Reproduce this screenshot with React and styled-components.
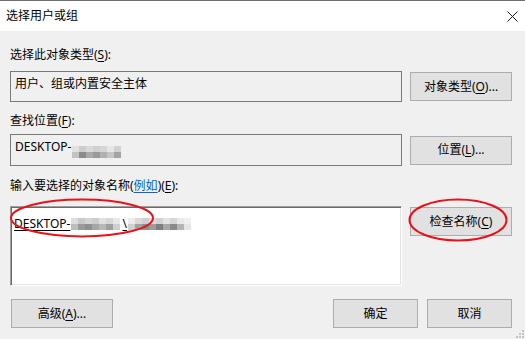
import React from 'react';
import styled, { createGlobalStyle } from 'styled-components';

const GlobalStyle = createGlobalStyle`
	html, body {
		margin: 0;
		padding: 0;
		background: #f0f0f0;
	}
	* {
		box-sizing: border-box;
	}
`;

// Mosaic cell colours for the blurred computer/user names
const locationMosaic = [
	['#e2e2e2', '#cdcdcd', '#d9d9d9', '#d0d0d0', '#d6d6d6', '#e6e6e6', '#d2d2d2'],
	['#c2c2c2', '#8c8c8c', '#a9a9a9', '#9a9a9a', '#b1b1b1', '#c6c6c6', '#a3a3a3'],
];

const hostMosaic = [
	['#dcdcdc', '#c9c9c9', '#d4d4d4', '#cccccc', '#e0e0e0', '#d7d7d7', '#e8e8e8'],
	['#bdbdbd', '#9a9a9a', '#8f8f8f', '#a6a6a6', '#b8b8b8', '#9e9e9e', '#cfcfcf'],
];

const userMosaic = [
	['#ececec', '#d9d9d9', '#cfcfcf', '#dcdcdc', '#d2d2d2', '#e4e4e4', '#d6d6d6', '#eaeaea', '#f0f0f0'],
	['#d0d0d0', '#a2a2a2', '#8e8e8e', '#9c9c9c', '#7f7f7f', '#a8a8a8', '#8a8a8a', '#b4b4b4', '#e6e6e6'],
];

const Mosaic = ({ rows, cell = 7 }) => (
	<MosaicGrid $cols={rows[0].length} $cell={cell}>
		{rows.flat().map((c, i) => (
			<MosaicCell key={i} $color={c} />
		))}
	</MosaicGrid>
);

const App = () => {
	return (
		<>
			<GlobalStyle />
			<Dialog>
				<TitleBar>
					<Title>选择用户或组</Title>
					<Close width='11' height='11' viewBox='0 0 11 11'>
						<path d='M0.5 0.5 L10.5 10.5 M10.5 0.5 L0.5 10.5' stroke='#1a1a1a' strokeWidth='1' fill='none' />
					</Close>
				</TitleBar>
				<Body>
					<Label $top={16}>
						选择此对象类型(<U>S</U>):
					</Label>
					<Row $top={8}>
						<ReadField $h={31} $pad={4}>用户、组或内置安全主体</ReadField>
						<Button>
							对象类型(<U>O</U>)...
						</Button>
					</Row>

					<Label $top={11}>
						查找位置(<U>F</U>):
					</Label>
					<Row $top={5}>
						<ReadField $h={32} $pad={4}>
							<Latin>DESKTOP-</Latin>
							<Mosaic rows={locationMosaic} />
						</ReadField>
						<Button>
							位置(<U>L</U>)...
						</Button>
					</Row>

					<Label $top={12}>
						输入要选择的对象名称(<Link>例如</Link>)(<U>E</U>):
					</Label>
					<Row $top={12} $top_align>
						<NameField>
							<NameLine>
								<Latin $underline>DESKTOP-</Latin>
								<Mosaic rows={hostMosaic} />
								<Latin $underline>\</Latin>
								<Mosaic rows={userMosaic} />
							</NameLine>
						</NameField>
						<Button $start>
							检查名称(<U>C</U>)
						</Button>
					</Row>

					<Footer>
						<Button $w={102}>
							高级(<U>A</U>)...
						</Button>
						<FooterRight>
							<Button $w={85}>确定</Button>
							<Button $w={85}>取消</Button>
						</FooterRight>
					</Footer>
				</Body>

				<Annotations width='525' height='339' viewBox='0 0 525 339'>
					<ellipse cx='82' cy='218' rx='71' ry='18.5' stroke='#e8121b' strokeWidth='2' fill='none' />
					<ellipse cx='458' cy='220' rx='48.5' ry='20.5' stroke='#e8121b' strokeWidth='2' fill='none' />
				</Annotations>

				<Grip width='10' height='10' viewBox='0 0 10 10'>
					<rect x='7' y='1' width='2' height='2' fill='#c4c4c4' />
					<rect x='4' y='4' width='2' height='2' fill='#c4c4c4' />
					<rect x='7' y='4' width='2' height='2' fill='#c4c4c4' />
					<rect x='1' y='7' width='2' height='2' fill='#c4c4c4' />
					<rect x='4' y='7' width='2' height='2' fill='#c4c4c4' />
					<rect x='7' y='7' width='2' height='2' fill='#c4c4c4' />
				</Grip>
			</Dialog>
		</>
	);
};

const Dialog = styled.div`
	position: relative;
	width: 525px;
	height: 339px;
	background: #f0f0f0;
	border-top: 1px solid #6f6f6f;
	font-family: 'Segoe UI', 'Noto Sans', 'Noto Sans CJK SC', sans-serif;
	font-size: 12px;
	line-height: 16px;
	color: #000;
	overflow: hidden;
`;

const TitleBar = styled.div`
	height: 30px;
	background: #fff;
	display: flex;
	align-items: center;
	justify-content: space-between;
	padding: 0 7px 0 6px;
`;

const Title = styled.span`
	font-size: 12px;
	color: #000;
`;

const Close = styled.svg`
	display: block;
	margin-top: 1px;
`;

const Body = styled.div`
	padding: 0 13px 0 10px;
	display: flex;
	flex-direction: column;
`;

const Label = styled.div`
	margin-top: ${(p) => p.$top}px;
	white-space: nowrap;
`;

const U = styled.span`
	text-decoration: underline;
	text-underline-offset: 2px;
`;

const Link = styled.span`
	color: #0066cc;
	text-decoration: underline;
	text-underline-offset: 2px;
`;

const Row = styled.div`
	margin-top: ${(p) => p.$top}px;
	display: flex;
	align-items: ${(p) => (p.$top_align ? 'flex-start' : 'center')};
	gap: 8px;
`;

const ReadField = styled.div`
	width: 392px;
	height: ${(p) => p.$h}px;
	border: 1px solid #7a7a7a;
	background: #f0f0f0;
	padding: ${(p) => p.$pad}px 4px 0;
	display: flex;
	align-items: flex-start;
	white-space: nowrap;
`;

const NameField = styled.div`
	width: 392px;
	height: 80px;
	background: #fff;
	border: 1px solid;
	border-color: #a0a0a0 #fff #fff #a0a0a0;
	box-shadow: inset 1px 1px 0 #696969, inset -1px -1px 0 #e3e3e3;
	padding: 9px 3px 0;
`;

const NameLine = styled.div`
	display: flex;
	align-items: center;
	white-space: nowrap;
`;

const Latin = styled.span`
	font-family: 'Segoe UI', 'Noto Sans', sans-serif;
	text-decoration: ${(p) => (p.$underline ? 'underline' : 'none')};
	text-underline-offset: 2px;
`;

const MosaicGrid = styled.span`
	display: inline-grid;
	grid-template-columns: repeat(${(p) => p.$cols}, ${(p) => p.$cell}px);
	grid-auto-rows: 6px;
	margin: 0 2px 0 1px;
	align-self: center;
`;

const MosaicCell = styled.span`
	background: ${(p) => p.$color};
`;

const Button = styled.div`
	flex: none;
	width: ${(p) => (p.$w ? p.$w : 102)}px;
	height: 29px;
	margin-top: ${(p) => (p.$start ? 1 : 0)}px;
	background: #e1e1e1;
	border: 1px solid #adadad;
	display: flex;
	align-items: center;
	justify-content: center;
	white-space: nowrap;
`;

const Footer = styled.div`
	margin-top: 13px;
	display: flex;
	justify-content: space-between;
	padding-left: 1px;
`;

const FooterRight = styled.div`
	display: flex;
	gap: 9px;
`;

const Annotations = styled.svg`
	position: absolute;
	left: 0;
	top: -1px;
	pointer-events: none;
`;

const Grip = styled.svg`
	position: absolute;
	right: 0;
	bottom: 0;
`;

export default App;
